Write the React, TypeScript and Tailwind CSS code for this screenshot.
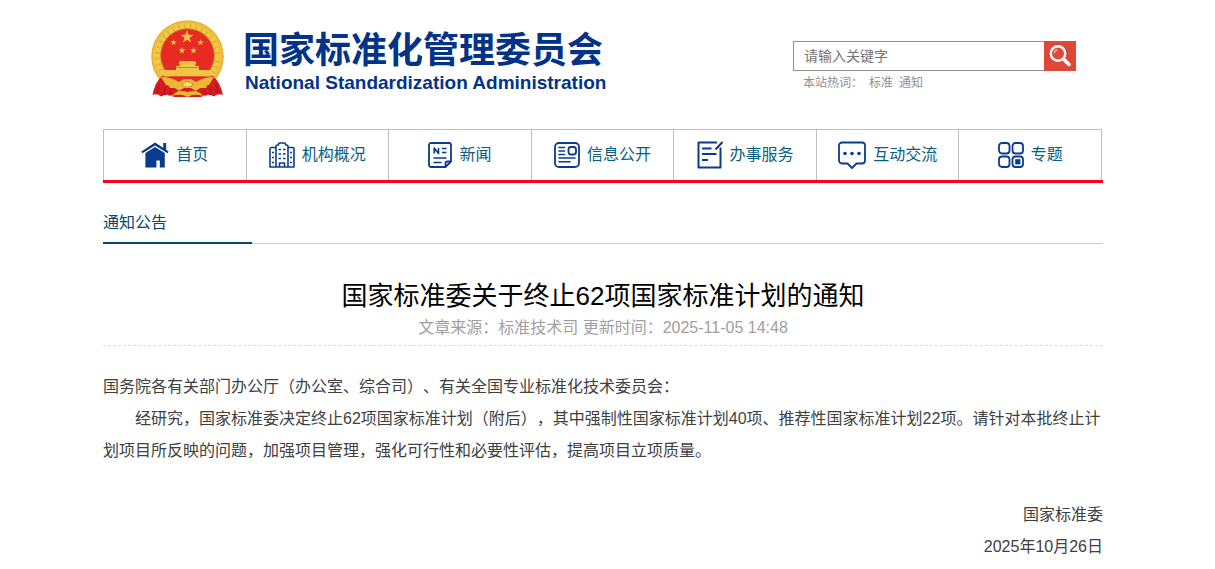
import React from 'react';

const navy = '#0b3b8c';

const HomeIcon = () => (
  <svg width="28" height="28" viewBox="0 0 28 28" fill={navy} aria-hidden="true">
    <path d="M14 1.6 0.4 10.4l1 1.9L14 4.6l12.6 7.7 1-1.9-2.4-1.6V2h-3v4.8z" />
    <path d="M14 6 4.400 12V26.400h11v-6.800h3.400v6.800h5V12z" />
  </svg>
);

const BuildingIcon = () => (
  <svg width="26" height="28" viewBox="0 0 26 28" fill="none" stroke={navy} strokeWidth="1.600" strokeLinejoin="round" aria-hidden="true">
    <path d="M7 26V5.500a1.500 1.500 0 0 1 1.500-1.500H9.500V3a1 1 0 0 1 1-1h5a1 1 0 0 1 1 1v1h1A1.500 1.500 0 0 1 19 5.500V26" />
    <path d="M7 6.500H2.500A1.500 1.500 0 0 0 1 8v18h24V8a1.500 1.500 0 0 0-1.500-1.500H19" />
    <path d="M10.500 26v-4h5v4" />
    <path d="M3 11.500h2m-2 5h2m-2 5h2m16-10h2m-2 5h2m-2 5h2M9.500 8.500h2.500m2 0h2.500M9.500 13h2.500m2 0h2.500M9.500 17.500h2.500m2 0h2.500" />
  </svg>
);

const NewsIcon = () => (
  <svg width="24" height="28" viewBox="0 0 24 28" fill="none" stroke={navy} strokeWidth="1.800" strokeLinejoin="round" aria-hidden="true">
    <path d="M3 2h18a2 2 0 0 1 2 2v16.500L17.500 26H3a2 2 0 0 1-2-2V4a2 2 0 0 1 2-2z" />
    <path d="M17.500 26v-3.500a2 2 0 0 1 2-2H23" />
    <path d="M6.200 12.500V7l4.300 5.500V7M14 7.500h4.500M14 11.500h4.500M5.500 17h13M5.500 21.500h8" strokeWidth="1.600" />
  </svg>
);

const InfoIcon = () => (
  <svg width="26" height="28" viewBox="0 0 26 28" fill="none" stroke={navy} strokeWidth="1.800" strokeLinecap="round" aria-hidden="true">
    <rect x="1" y="2" width="24" height="24" rx="4" />
    <rect x="14.500" y="6" width="7.500" height="7.500" rx="2.500" />
    <path d="M5 6.500h5.500M5 10h5.500M5 13.500h5.500M5 17h16M5 20.700h11" strokeWidth="1.600" />
  </svg>
);

const ServiceIcon = () => (
  <svg width="26" height="28" viewBox="0 0 26 28" fill="none" stroke={navy} strokeWidth="2" strokeLinejoin="round" aria-hidden="true">
    <path d="M20 1.500H1.500v25h22V6.500" />
    <path d="M5 7.500h9.500M5 13h14.500M5 19h6" />
    <path d="M25.500 1 18.500 8.500" />
  </svg>
);

const ChatIcon = () => (
  <svg width="28" height="28" viewBox="0 0 28 28" fill="none" stroke={navy} strokeWidth="1.800" strokeLinejoin="round" aria-hidden="true">
    <path d="M4 1.500h20a3 3 0 0 1 3 3v15a3 3 0 0 1-3 3h-5.500L14 27l-4.500-4.500H4a3 3 0 0 1-3-3v-15a3 3 0 0 1 3-3z" />
    <g fill={navy} stroke="none">
      <circle cx="7" cy="12.500" r="1.800" />
      <circle cx="14" cy="12.500" r="1.800" />
      <circle cx="21" cy="12.500" r="1.800" />
    </g>
  </svg>
);

const TopicIcon = () => (
  <svg width="26" height="28" viewBox="0 0 26 28" fill="none" stroke={navy} strokeWidth="1.800" aria-hidden="true">
    <rect x="1" y="2" width="10.500" height="10.500" rx="3" />
    <rect x="14.500" y="2" width="10.500" height="10.500" rx="3" />
    <rect x="1" y="15.500" width="10.500" height="10.500" rx="3" />
    <rect x="14.500" y="15.500" width="10.500" height="10.500" rx="3" />
    <rect x="17.200" y="18.200" width="5.200" height="5.200" fill={navy} stroke="none" />
  </svg>
);

const STAR = 'M0-10 2.300-3.200 9.500-3.100 3.800 1.200 5.900 8.100 0 4 -5.900 8.100 -3.800 1.200 -9.500-3.100 -2.300-3.200z';

const Emblem = () => (
  <svg width="74" height="78" viewBox="0 0 74 78" role="img" aria-label="国徽">
    <circle cx="36.500" cy="36.500" r="36.300" fill="#e8b436" />
    <circle cx="36.500" cy="36.500" r="31" fill="none" stroke="#f2c848" strokeWidth="7" strokeDasharray="4 2" />
    <circle cx="36.500" cy="36.500" r="33.500" fill="none" stroke="#efc040" strokeWidth="2" />
    <circle cx="36.500" cy="35.500" r="26.800" fill="#e52b22" stroke="#c98a1d" strokeWidth="1" />
    <g fill="#efc548">
      <path d={STAR} transform="translate(36 17) scale(.68)" />
      <path d={STAR} transform="translate(22.500 22.500) scale(.34)" />
      <path d={STAR} transform="translate(49.500 22.500) scale(.34)" />
      <path d={STAR} transform="translate(31 30.500) scale(.36)" />
      <path d={STAR} transform="translate(42.500 30.500) scale(.36)" />
      <path d="M29 41h15l1.500 3h-1v2H48v4h13v6.500H13V50h12v-4h3.500v-2h-1z" />
    </g>
    <path d="M25 47.500h23" stroke="#cf8b22" strokeWidth="1" />
    <path d="M10 56.500h53l-4 8-12 3-10-6-10 6-13-3z" fill="#e52b22" />
    <path d="M12 55.500Q4 61 1.500 75Q6 73 10 76.500Q17 73 23 77H50Q57 73 63 76.500Q67 73 72 75Q69 61 61 55.500L55 68H19z" fill="#d51b20" />
    <path d="M8 64 6 73M14 67 13 75M20 70 18 76M65 64l2 9M59 67l1 8M53 70l2 6" stroke="#a50f16" strokeWidth="1" />
    <path d="M10 57Q20 57 28 62L33 59H40L45 62Q53 57 63 57L58 65Q51 66 45 71L40 68H33L28 71Q22 66 15 65z" fill="#eab834" />
    <path d="M30.500 64.500Q36.500 58.500 42.500 64.500Q36.500 70 30.500 64.500z" fill="#f9dd72" stroke="#c98a1d" strokeWidth="1" />
    <path d="M21 76Q26 69 36.500 72Q47 69 52 76Q43 73 36.500 77Q30 73 21 76z" fill="#eab834" />
  </svg>
);

const SearchIcon = () => (
  <svg width="24" height="24" viewBox="0 0 24 24" fill="none" aria-hidden="true">
    <circle cx="10" cy="9.500" r="7.200" stroke="#fff" strokeWidth="2.400" />
    <path d="M6.300 9A4 4 0 0 1 9.500 5.800" stroke="#f6b8b0" strokeWidth="1.400" />
    <path d="m15.500 15 5.500 5.500" stroke="#fff" strokeWidth="3.600" strokeLinecap="round" />
  </svg>
);

const menu = [
  { label: '首页', icon: HomeIcon },
  { label: '机构概况', icon: BuildingIcon },
  { label: '新闻', icon: NewsIcon },
  { label: '信息公开', icon: InfoIcon },
  { label: '办事服务', icon: ServiceIcon },
  { label: '互动交流', icon: ChatIcon },
  { label: '专题', icon: TopicIcon },
];

function Header() {
  return (
    <header className="flex items-start justify-between pt-5 pr-[27px] pb-[31px] pl-12">
      <a href="#" className="flex items-start gap-[18px] text-[#033389]">
        <Emblem />
        <span className="flex flex-col pt-2.5 font-bold whitespace-nowrap">
          <span className="text-[36px] leading-[42px]">国家标准化管理委员会</span>
          <span className="pl-0.5 text-[19px] leading-[22px]">National Standardization Administration</span>
        </span>
      </a>
      <div className="pt-[21px]">
        <form className="flex" onSubmit={(e) => e.preventDefault()}>
          <input
            type="text"
            aria-label="关键字"
            placeholder="请输入关键字"
            className="h-[30px] w-[251px] border border-r-0 border-[#919191] px-2.5 text-sm text-[#666] placeholder:text-[#757575] outline-none"
          />
          <button type="submit" aria-label="搜索" className="flex h-[30px] w-8 items-center justify-center bg-[#de4839]">
            <SearchIcon />
          </button>
        </form>
        <p className="flex pt-0.5 pl-2.5 text-xs leading-5 text-[#8e8e93]">
          <span>本站热词：</span>
          <a href="#" className="ml-1.5">标准</a>
          <a href="#" className="ml-1.5">通知</a>
        </p>
      </div>
    </header>
  );
}

function Nav() {
  return (
    <nav className="border-b-[3px] border-[#fb0021]">
      <ul className="mr-px grid h-[51px] grid-cols-7 border-t border-l border-[#bfbfbf]">
        {menu.map(({ label, icon: Icon }) => (
          <li key={label} className="border-r border-[#bfbfbf]">
            <a href="#" className="flex h-full items-center justify-center gap-[7px] text-base text-[#075e80]">
              <Icon />
              <span>{label}</span>
            </a>
          </li>
        ))}
      </ul>
    </nav>
  );
}

export default function App() {
  return (
    <div className="min-h-screen bg-white pr-[9px] font-['Liberation_Sans','Noto_Sans_CJK_SC',sans-serif] [text-spacing-trim:space-all]">
      <div className="mx-auto max-w-[1000px]">
        <Header />
        <Nav />
        <div className="mt-6 flex border-b border-[#cfcfcf]">
          <h2 className="-mb-px w-[149px] border-b-2 border-[#04466f] pb-[3px] text-base leading-8 text-[#04466f]">通知公告</h2>
        </div>
        <article>
          <h1 className="pt-8 text-center text-[26px] leading-10 text-black">国家标准委关于终止62项国家标准计划的通知</h1>
          <p className="border-b border-dashed border-[#dcdcdc] pb-[5px] text-center text-base leading-6 text-[#a0a0a0]">
            文章来源：标准技术司 更新时间：2025-11-05 14:48
          </p>
          <div className="pt-[25px] text-base leading-8 text-[#404040]">
            <p>国务院各有关部门办公厅（办公室、综合司）、有关全国专业标准化技术委员会：</p>
            <p className="indent-8">
              经研究，国家标准委决定终止62项国家标准计划（附后），其中强制性国家标准计划40项、推荐性国家标准计划22项。请针对本批终止计划项目所反映的问题，加强项目管理，强化可行性和必要性评估，提高项目立项质量。
            </p>
            <p className="pt-8 text-right">国家标准委</p>
            <p className="text-right">2025年10月26日</p>
          </div>
        </article>
      </div>
    </div>
  );
}
